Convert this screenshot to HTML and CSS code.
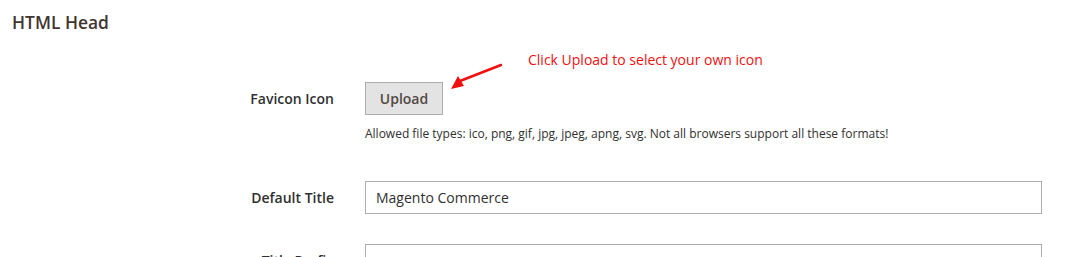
FILE: index.html
```html
<!DOCTYPE html>
<html lang="en">
<head>
    <meta charset="UTF-8">
    <meta name="viewport" content="width=device-width, initial-scale=1.0">
    <title>HTML Head</title>
    <link rel="stylesheet" href="styles.css">
</head>
<body>
    <div class="section">
        <h2 class="section-title">HTML Head</h2>
        <div class="fields">
            <div class="field field-favicon">
                <label class="label">Favicon Icon</label>
                <div class="control">
                    <button class="upload-btn">Upload</button>
                    <p class="note">Allowed file types: ico, png, gif, jpg, jpeg, apng, svg. Not all browsers support all these formats!</p>
                </div>
                <div class="callout">
                    <svg class="callout-arrow" width="60" height="32" viewBox="0 0 60 32">
                        <line x1="55" y1="7" x2="14" y2="23" stroke="#f01010" stroke-width="2.5" stroke-linecap="round"/>
                        <polygon points="5,31 12,18 18,28" fill="#f01010"/>
                    </svg>
                    <span class="callout-text">Click Upload to select your own icon</span>
                </div>
            </div>
            <div class="field">
                <label class="label">Default Title</label>
                <div class="control">
                    <input class="text-input" type="text" value="Magento Commerce">
                </div>
            </div>
            <div class="field">
                <label class="label">Title Prefix</label>
                <div class="control">
                    <input class="text-input" type="text" value="">
                </div>
            </div>
        </div>
    </div>
</body>
</html>
```

FILE: styles.css
```css
body {
    margin: 0;
    padding: 0;
    font-family: "Open Sans", Arial, sans-serif;
    color: #303030;
    background-color: #ffffff;
}
.section-title {
    margin: 0;
    padding: 12px 0 0 12px;
    font-size: 17.4px;
    font-weight: 600;
    line-height: 20px;
    color: #41362f;
}
.fields {
    padding-top: 50px;
}
.field {
    display: flex;
    align-items: flex-start;
    position: relative;
}
.field + .field {
    margin-top: 30px;
}
.field-favicon + .field {
    margin-top: 38px;
}
.label {
    width: 365px;
    padding-right: 31px;
    box-sizing: border-box;
    text-align: right;
    font-size: 14px;
    font-weight: 600;
    line-height: 33px;
    color: #303030;
}
.control {
    width: 677px;
}
.upload-btn {
    width: 78px;
    height: 33px;
    padding: 0;
    background-color: #e3e3e3;
    border: 1px solid #adadad;
    font-family: "Open Sans", Arial, sans-serif;
    font-size: 14px;
    font-weight: 600;
    color: #514943;
    cursor: pointer;
}
.note {
    margin: 10px 0 0;
    font-size: 12px;
    line-height: 18px;
    color: #303030;
}
.text-input {
    display: block;
    width: 100%;
    height: 33px;
    box-sizing: border-box;
    padding: 0 10px;
    border: 1px solid #adadad;
    font-family: "Open Sans", Arial, sans-serif;
    font-size: 14px;
    color: #303030;
    outline: none;
}
.callout {
    position: absolute;
    left: 446px;
    top: -28px;
    display: flex;
    align-items: flex-start;
}
.callout-arrow {
    display: block;
    margin-top: 4px;
}
.callout-text {
    margin-left: 22px;
    margin-top: -4px;
    font-size: 14px;
    line-height: 20px;
    color: #f01010;
}
```
